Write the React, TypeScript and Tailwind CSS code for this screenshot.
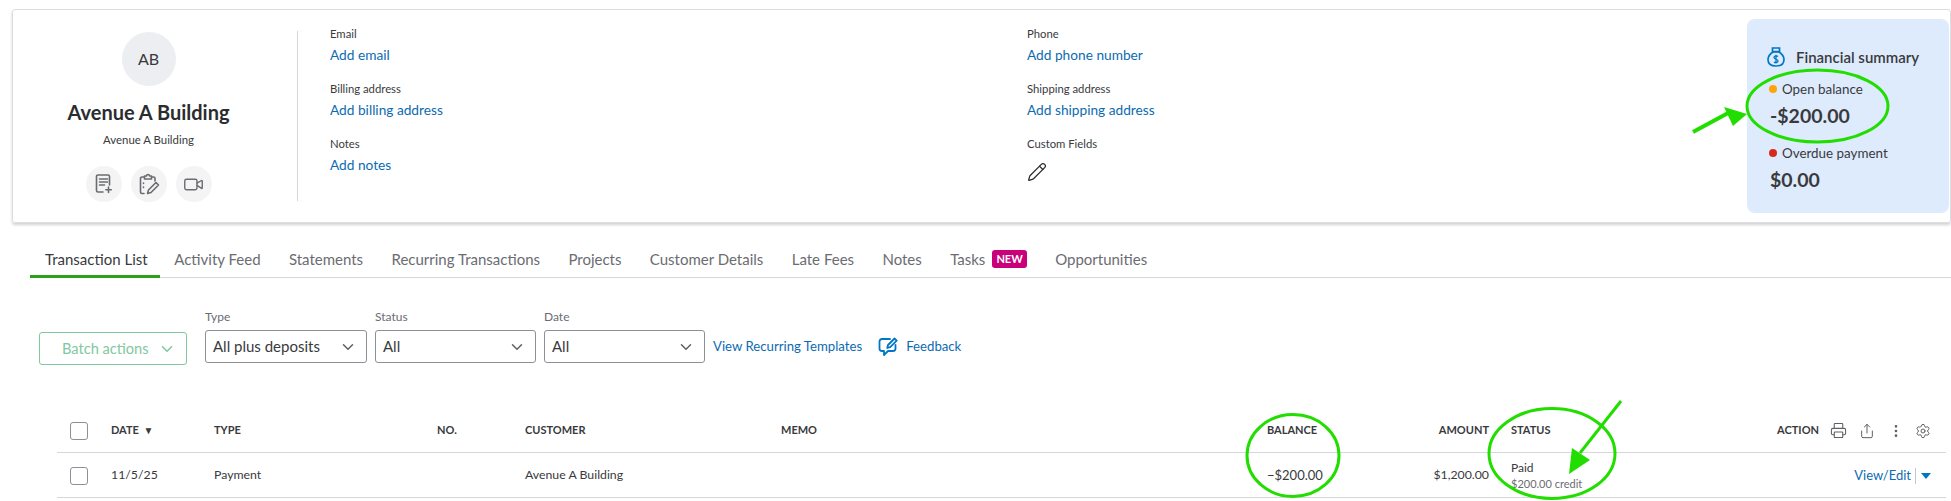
import { ChevronDown, EllipsisVertical, Pencil, Printer, Settings, Share, Video } from "lucide-react";

const tabs = ["Activity Feed", "Statements", "Recurring Transactions", "Projects", "Customer Details", "Late Fees", "Notes"]

const grid = "grid grid-cols-[41px_103px_223px_88px_256px_486px_72px_172px_1fr_auto] items-center ml-[57px] mr-[5px] pl-[13px] pr-[15px] border-b border-[#d4d7dc]"

function NoteAdd() {
  return (
    <svg width="18" height="20" viewBox="0 0 18 20" fill="none" stroke="#6b6c72" strokeWidth="1.6" strokeLinecap="round">
      <path d="M8 18H3a1.5 1.5 0 0 1-1.5-1.5v-14A1.5 1.5 0 0 1 3 1h10a1.5 1.5 0 0 1 1.5 1.5V11" />
      <path d="M4.5 5h8M4.5 8h8M4.5 11h5M13.500 13v5.500M10.800 15.700h5.500" />
    </svg>
  )
}

function ClipboardEdit() {
  return (
    <svg width="22" height="22" viewBox="0 0 22 22" fill="none" stroke="#6b6c72" strokeWidth="1.6" strokeLinecap="round" strokeLinejoin="round">
      <path d="M6 4H4a1.500 1.500 0 0 0-1.500 1.500V19A1.500 1.500 0 0 0 4 20.500h2" />
      <path d="M14 4h1.500A1.500 1.500 0 0 1 17 5.500V8" />
      <path d="M6.500 3h2a1.500 1.500 0 0 1 3 0h2v3h-7z" />
      <path d="M5.500 10v.5M5.500 14v.5" />
      <path d="M18 9.500 20.500 12 13 19.500l-3.500 1 1-3.500z" />
    </svg>
  )
}

function MoneyBag() {
  return (
    <svg width="18" height="20" viewBox="0 0 18 20" fill="none" stroke="#0077c5" strokeWidth="1.700">
      <path d="M5.500 1h7v3.500h-7z" />
      <path d="M6 5C3 7 1 9.500 1 12.500 1 16.500 4 19 9 19s8-2.500 8-6.500C17 9.500 15 7 12 5z" />
      <path d="M11 9.500C10 8.500 7 8.500 7 10.500s4 1.500 4 3.500-3 2-4 1M9 7.800v8.800" strokeWidth="1.300" />
    </svg>
  )
}

function FeedbackIcon() {
  return (
    <svg width="20" height="20" viewBox="0 0 20 20" fill="none" stroke="#0077c5" strokeWidth="1.800" strokeLinecap="round" strokeLinejoin="round">
      <path d="M12 2H4a2.500 2.500 0 0 0-2.500 2.500v7A2.500 2.500 0 0 0 4 14h2v4l4-4h5a2.500 2.500 0 0 0 2.500-2.500V8" />
      <path d="M16.500 1.500 10 8l-.8 3 3-.8 6.500-6.500z" />
    </svg>
  )
}

function InfoBlock({ label, link }: { label: string, link: string }) {
  return (
    <div className="h-[55px]">
      <div className="text-[11.300px] leading-4 text-[#393a3d]">{label}</div>
      <a className="block mt-[3px] text-[13.700px] leading-5 text-[#0c6bb1]">{link}</a>
    </div>
  )
}

function RoundButton({ children }: { children: React.ReactNode }) {
  return <div className="w-9 h-9 rounded-full bg-[#f4f4f5] flex items-center justify-center">{children}</div>
}

function Select({ label, value, width }: { label: string, value: string, width: string }) {
  return (
    <div className={width}>
      <div className="text-xs leading-4 text-[#6b6c72] mb-[5px]">{label}</div>
      <div className="h-[33px] border border-[#8d9096] rounded-[3px] flex items-center justify-between pl-[7px] pr-[9px] text-[15px] text-[#393a3d]">
        <span>{value}</span>
        <ChevronDown size={18} className="text-[#5f6066]" />
      </div>
    </div>
  )
}

function Metric({ dot, label, value }: { dot: string, label: string, value: string }) {
  return (
    <div className="h-[64px]">
      <div className="flex items-center gap-[5px] h-4">
        <span className={`w-2 h-2 rounded-full ${dot}`} />
        <span className="text-[13.400px] text-[#393a3d]">{label}</span>
      </div>
      <div className="mt-[6px] ml-px text-[19.500px] leading-[26px] font-bold text-[#393a3d]">{value}</div>
    </div>
  )
}

export default function App() {
  return (
    <div className="relative w-[1951px] h-[501px] overflow-hidden bg-white font-['Lato',sans-serif] text-[#393a3d]">
      <div className="ml-3 mt-[9px] h-[214px] flex border border-[#dcdde0] rounded-[3px] shadow-[0_2px_3px_rgba(0,0,0,0.18)]">
        <div className="w-[271px] pt-[22px] flex flex-col items-center">
          <div className="w-[54px] h-[54px] rounded-full bg-[#eceef1] flex items-center justify-center text-base text-[#393a3d]">AB</div>
          <h2 className="mt-[14px] text-[20px] leading-6 font-bold text-[#2b2c2f]">Avenue A Building</h2>
          <div className="mt-[8px] text-[11.400px] leading-4">Avenue A Building</div>
          <div className="mt-[18px] flex gap-[9px]">
            <RoundButton><NoteAdd /></RoundButton>
            <RoundButton><ClipboardEdit /></RoundButton>
            <RoundButton><Video size={21} strokeWidth={1.6} className="text-[#6b6c72]" /></RoundButton>
          </div>
        </div>
        <div className="ml-[13px] mt-[21px] w-px h-[170px] bg-[#d4d7dc]" />
        <div className="ml-8 pt-4 w-[697px]">
          <InfoBlock label="Email" link="Add email" />
          <InfoBlock label="Billing address" link="Add billing address" />
          <InfoBlock label="Notes" link="Add notes" />
        </div>
        <div className="pt-4 w-[720px]">
          <InfoBlock label="Phone" link="Add phone number" />
          <InfoBlock label="Shipping address" link="Add shipping address" />
          <div className="text-[11.300px] leading-4 text-[#393a3d]">Custom Fields</div>
          <Pencil size={20} strokeWidth={1.500} className="mt-[10px] text-[#2b2c2f]" />
        </div>
        <div className="mt-[9px] w-[202px] h-[194px] rounded-lg bg-[#deebfc] pl-[22px] pt-7">
          <div className="flex items-center gap-[11px] h-5 -ml-[2px]">
            <MoneyBag />
            <span className="text-[15px] font-semibold text-[#393a3d]">Financial summary</span>
          </div>
          <div className="mt-[14px]">
            <Metric dot="bg-[#ffa50a]" label="Open balance" value="-$200.00" />
            <Metric dot="bg-[#d52b1e]" label="Overdue payment" value="$0.00" />
          </div>
        </div>
      </div>

      <div className="ml-[30px] mt-[26px] h-[29px] flex items-start border-b border-[#d4d7dc] text-[15px] leading-[21px]">
        <div className="w-[130px] h-[29px] pl-[15px] border-b-[3px] border-[#2ca01c] text-[#393a3d]">Transaction List</div>
        {tabs.map(tab => (
          <div key={tab} className="px-[14.200px] text-[#6b6c72]">{tab}</div>
        ))}
        <div className="px-[14.200px] flex items-center text-[#6b6c72]">
          Tasks
          <span className="ml-[7px] -mt-[2px] h-[18px] px-1 rounded-[3px] bg-[#c9007a] text-white text-[11px] leading-[17px] font-bold">NEW</span>
        </div>
        <div className="px-[14.200px] text-[#6b6c72]">Opportunities</div>
      </div>

      <div className="mt-[31px] ml-[39px] flex items-end">
        <div className="w-[148px] h-[33px] -mb-[2px] pl-[22px] border border-[#7fc8a0] rounded-[3px] flex items-center gap-[10px] text-[14.600px] text-[#7fc8a0]">
          Batch actions
          <ChevronDown size={18} />
        </div>
        <div className="ml-[18px] flex gap-2">
          <Select label="Type" value="All plus deposits" width="w-[162px]" />
          <Select label="Status" value="All" width="w-[161px]" />
          <Select label="Date" value="All" width="w-[161px]" />
        </div>
        <div className="ml-2 h-[33px] flex items-center text-[13.200px] text-[#0c6bb1]">
          View Recurring Templates
          <span className="ml-[16px] mr-2"><FeedbackIcon /></span>
          Feedback
        </div>
      </div>

      <div className={`${grid} mt-[45px] h-[45px] pt-[1px] text-[11px] font-bold`}>
        <span className="w-[18px] h-[18px] border border-[#8d9096] rounded-[3px]" />
        <span>DATE <span className="ml-[2px] text-[10px]">▼</span></span>
        <span>TYPE</span>
        <span>NO.</span>
        <span>CUSTOMER</span>
        <span>MEMO</span>
        <span>BALANCE</span>
        <span className="pr-[22px] text-right">AMOUNT</span>
        <span>STATUS</span>
        <div className="flex items-center text-[#393a3d]">
          <span className="mr-[11px]">ACTION</span>
          <Printer size={17} strokeWidth={1.500} className="text-[#5f6066]" />
          <Share size={16} strokeWidth={1.500} className="ml-3 text-[#5f6066]" />
          <EllipsisVertical size={16} strokeWidth={2} className="ml-[13px] text-[#5f6066]" />
          <Settings size={16} strokeWidth={1.500} className="ml-[11px] text-[#5f6066]" />
        </div>
      </div>
      <div className={`${grid} h-[45px] pt-[1px] text-[12.300px]`}>
        <span className="w-[18px] h-[18px] border border-[#8d9096] rounded-[3px]" />
        <span>11/5/25</span>
        <span>Payment</span>
        <span />
        <span>Avenue A Building</span>
        <span />
        <span className="text-[13px] whitespace-nowrap">−$200.00</span>
        <span className="pr-[22px] text-right">$1,200.00</span>
        <div className="leading-[15px]">
          <div className="text-xs">Paid</div>
          <div className="text-[11px] text-[#6b6c72]">$200.00 credit</div>
        </div>
        <div className="flex items-center text-[13px] text-[#0c6bb1]">
          <span>View/Edit</span>
          <span className="ml-1 w-px h-[16px] bg-[#c4c6ca]" />
          <span className="ml-[5px] w-0 h-0 border-x-[5px] border-x-transparent border-t-[6px] border-t-[#0077c5]" />
        </div>
      </div>

      {/* green annotations drawn over the screenshot */}
      <svg className="absolute inset-0 pointer-events-none" width="1951" height="501" fill="none" stroke="#22dd00" strokeWidth="3">
        <ellipse cx="1817.500" cy="106" rx="70.500" ry="36" />
        <ellipse cx="1293" cy="455.500" rx="46" ry="41" />
        <ellipse cx="1552" cy="453.500" rx="63" ry="45" />
        <path d="M1693 132 1730 112" strokeWidth="4" />
        <path d="M1747 114 1724 107 1733 126z" fill="#22dd00" stroke="none" />
        <path d="M1622 401 1581 453" transform="translate(-1 0)" />
        <path d="M1569 474 1572 448 1590 460z" fill="#22dd00" stroke="none" />
      </svg>
    </div>
  )
}
